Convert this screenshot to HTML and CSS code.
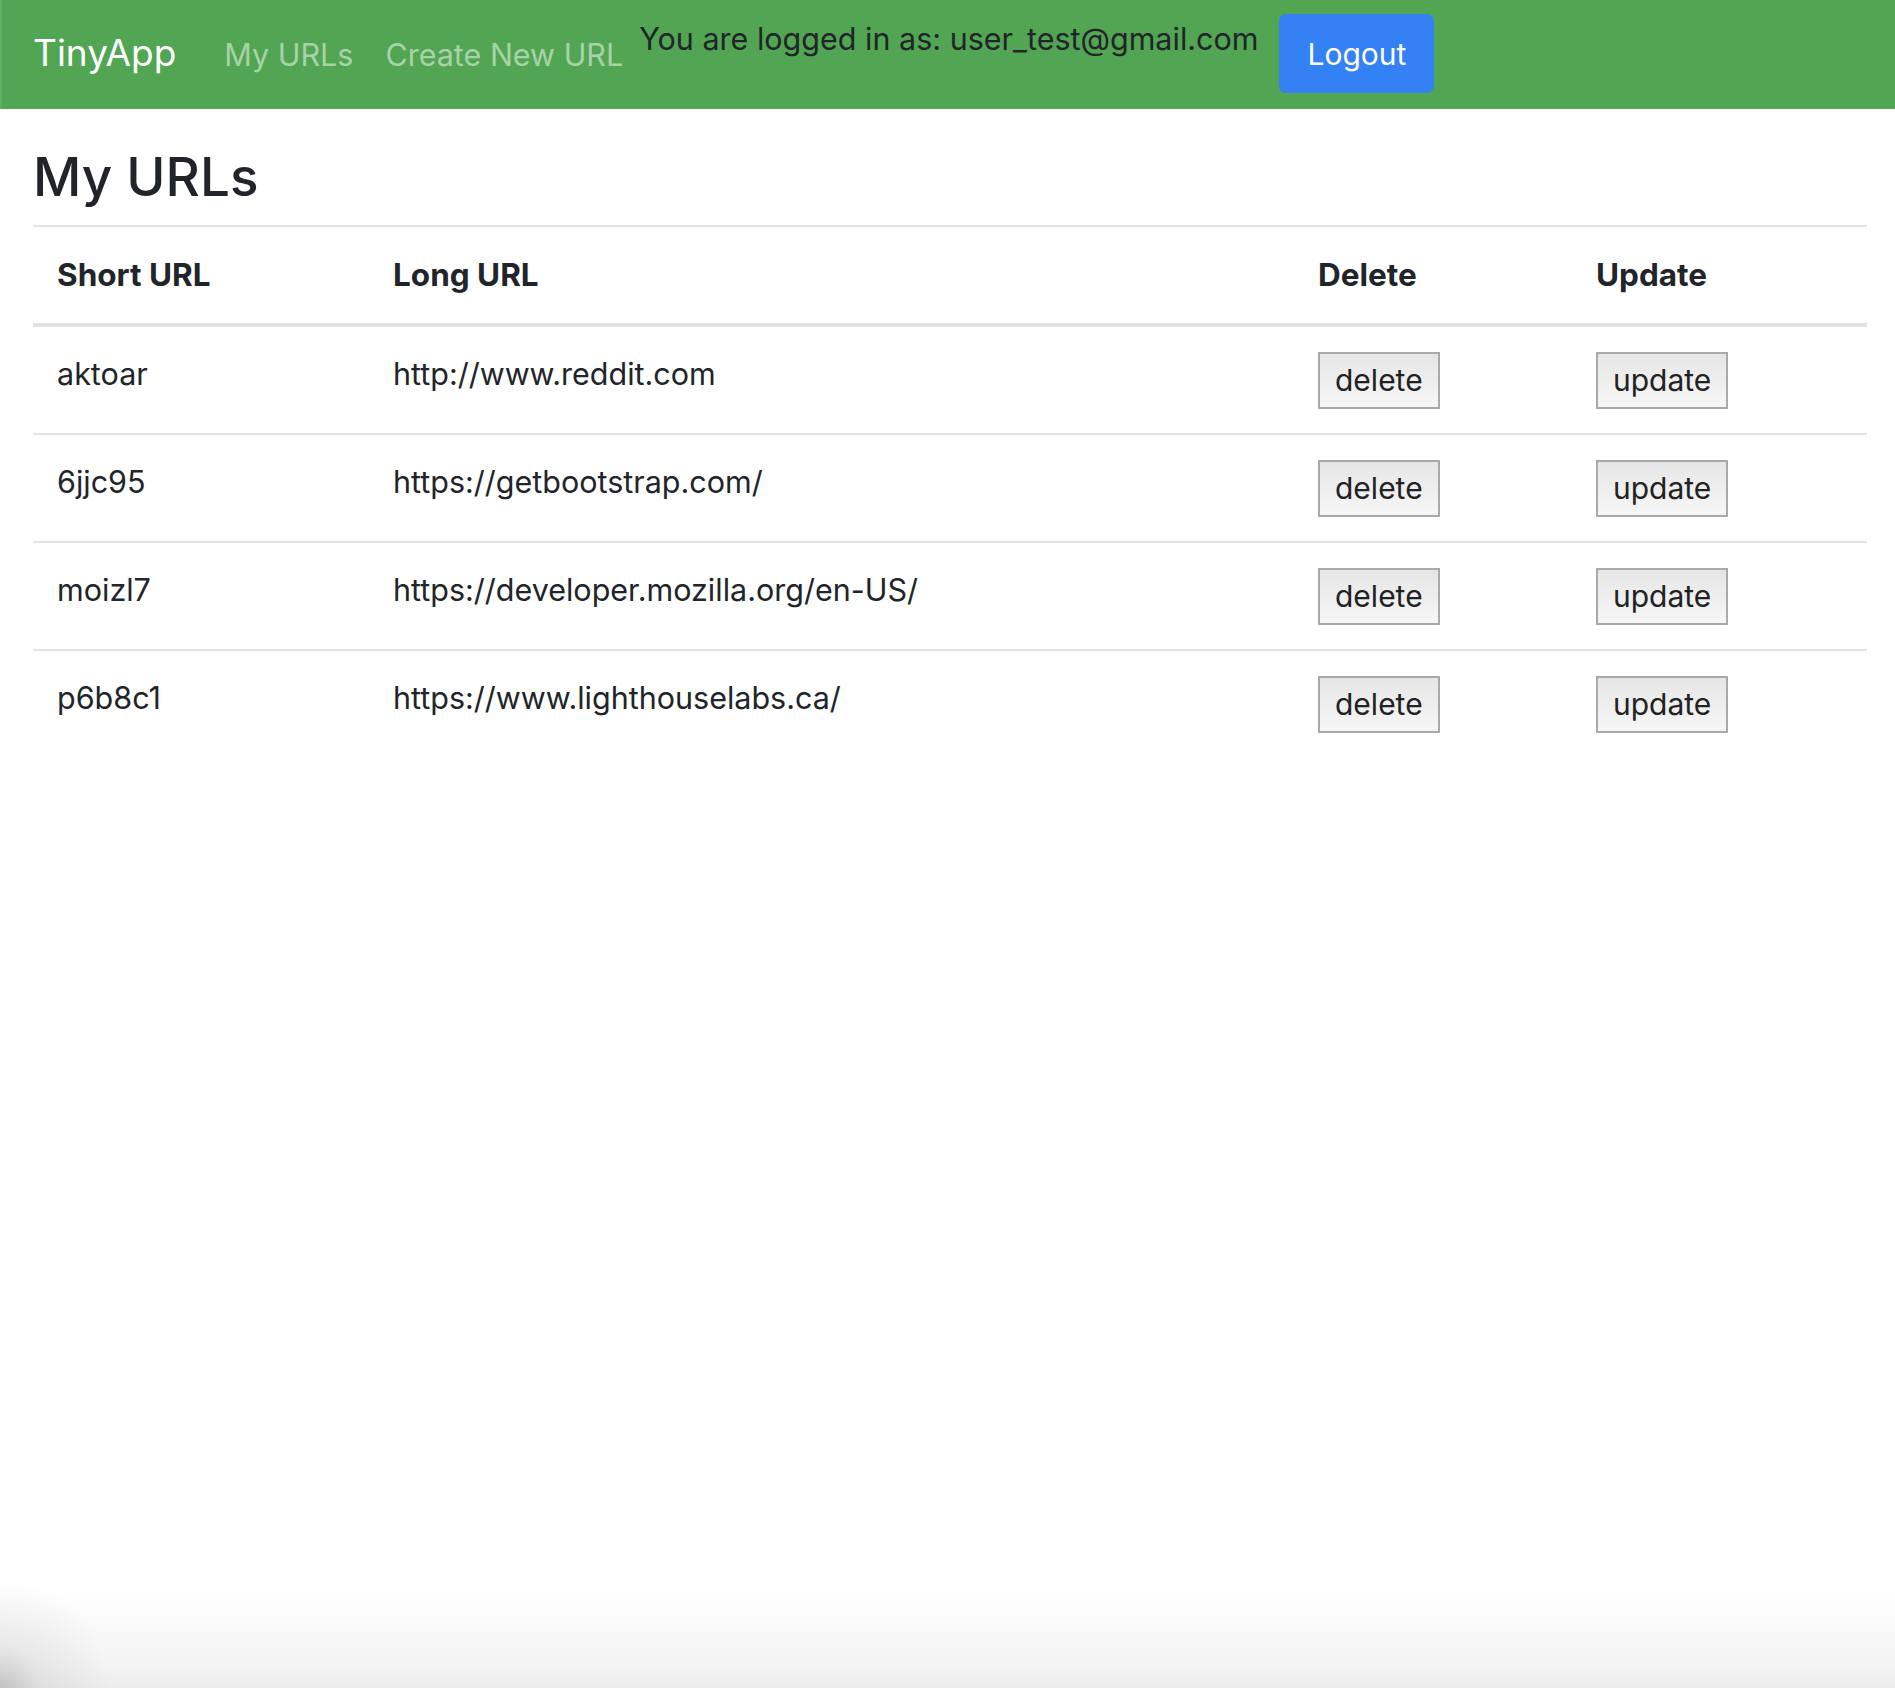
FILE: index.html
```html
<!DOCTYPE html>
<html lang="en">
<head>
<meta charset="utf-8">
<title>TinyApp</title>
<link rel="stylesheet" href="styles.css">
</head>
<body>
<nav class="navbar">
  <a class="brand" href="#">TinyApp</a>
  <a class="nav-link first" href="#">My URLs</a>
  <a class="nav-link" href="#">Create New URL</a>
  <span class="user">You are logged in as: user_test@gmail.com</span>
  <button class="logout" type="button">Logout</button>
</nav>
<main class="container">
  <h1 class="title">My URLs</h1>
  <table class="table">
    <thead>
      <tr>
        <th class="c1">Short URL</th>
        <th class="c2">Long URL</th>
        <th class="c3">Delete</th>
        <th class="c4">Update</th>
      </tr>
    </thead>
    <tbody>
      <tr>
        <td>aktoar</td>
        <td>http://www.reddit.com</td>
        <td><button class="btn" type="button">delete</button></td>
        <td><button class="btn" type="button">update</button></td>
      </tr>
      <tr>
        <td>6jjc95</td>
        <td>https://getbootstrap.com/</td>
        <td><button class="btn" type="button">delete</button></td>
        <td><button class="btn" type="button">update</button></td>
      </tr>
      <tr>
        <td>moizl7</td>
        <td>https://developer.mozilla.org/en-US/</td>
        <td><button class="btn" type="button">delete</button></td>
        <td><button class="btn" type="button">update</button></td>
      </tr>
      <tr>
        <td>p6b8c1</td>
        <td>https://www.lighthouselabs.ca/</td>
        <td><button class="btn" type="button">delete</button></td>
        <td><button class="btn" type="button">update</button></td>
      </tr>
    </tbody>
  </table>
</main>
<div class="corner-shade"></div>
</body>
</html>
```
FILE: styles.css
```css
html {
  min-height: 100%;
}
body {
  margin: 0;
  min-height: 1688px;
  font-family: Inter, "Liberation Sans", sans-serif;
  color: #212529;
  background: linear-gradient(to bottom, #ffffff 0, #ffffff calc(100% - 100px), #f3f3f3 calc(100% - 20px), #ececec 100%);
  position: relative;
}
.navbar {
  display: flex;
  align-items: flex-start;
  box-sizing: border-box;
  height: 109px;
  padding-left: 33px;
  background: #52a552;
  border-left: 2px solid #62ae62;
}
.navbar a {
  text-decoration: none;
}
.brand {
  font-size: 37px;
  line-height: 44px;
  margin-top: 31px;
  color: #ffffff;
  margin-left: -2px;
}
.nav-link {
  font-size: 30.5px;
  line-height: 40px;
  margin-top: 35px;
  color: #a8d2a8;
  margin-left: 32px;
}
.nav-link.first {
  margin-left: 48px;
}
.user {
  font-size: 30.5px;
  line-height: 40px;
  margin-top: 19px;
  margin-left: 16px;
  color: #212529;
}
.logout {
  margin-top: 14px;
  margin-left: 21px;
  height: 79px;
  padding: 0 28px;
  border: none;
  border-radius: 7px;
  background: #3481f6;
  color: #ffffff;
  font-family: Inter, "Liberation Sans", sans-serif;
  font-size: 30px;
}
.container {
  padding: 0 28px 0 33px;
}
.title {
  margin: 35px 0 14px;
  font-size: 53px;
  line-height: 67px;
  font-weight: 500;
}
.table {
  width: 100%;
  table-layout: fixed;
  border-collapse: collapse;
  font-size: 30.5px;
  line-height: 45px;
}
.table th {
  text-align: left;
  font-size: 31.5px;
  font-weight: 700;
  padding: 25px 24px 26px;
  border-top: 2px solid #dee2e6;
  border-bottom: 4px solid #dee2e6;
  vertical-align: top;
}
.table td {
  padding: 25px 24px 24px;
  border-top: 2px solid #dee2e6;
  vertical-align: top;
}
.table tbody tr:first-child td {
  border-top: none;
}
.table td:nth-child(1),
.table td:nth-child(2) {
  padding-top: 24px;
  padding-bottom: 25px;
}
.c1 { width: 288px; }
.c2 { width: 877px; }
.c3 { width: 230px; }
.c4 { width: 247px; }
.btn {
  box-sizing: border-box;
  height: 57px;
  padding: 0 15px;
  border: 2px solid #a9a9a9;
  border-radius: 0;
  background: linear-gradient(to bottom, #e6e6e6, #f6f6f6);
  color: #222222;
  font-family: Inter, "Liberation Sans", sans-serif;
  font-size: 30px;
  line-height: 45px;
  display: block;
}
.corner-shade {
  position: absolute;
  left: 0;
  bottom: 0;
  width: 120px;
  height: 120px;
  background: radial-gradient(circle at 0 100%, rgba(0,0,0,0.18) 0, rgba(0,0,0,0.06) 40px, rgba(0,0,0,0) 110px);
  pointer-events: none;
}
```
